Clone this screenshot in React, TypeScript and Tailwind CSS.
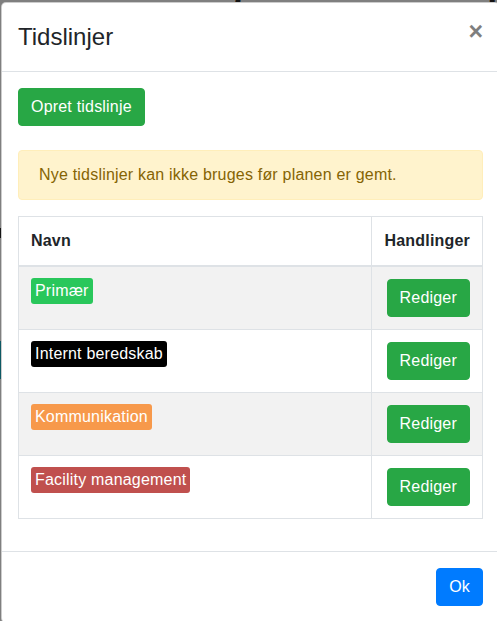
import React from "react";

const rows: { name: string; color: string }[] = [
  { name: "Primær", color: "bg-[#29c75b]" },
  { name: "Internt beredskab", color: "bg-[#000000]" },
  { name: "Kommunikation", color: "bg-[#f7994b]" },
  { name: "Facility management", color: "bg-[#c0504e]" },
];

export default function App() {
  return (
    <div
      className="relative w-[497px] h-[621px] overflow-hidden bg-[#7f7f7f] text-[#212529]"
      style={{ fontFamily: '"Liberation Sans", Arial, Helvetica, sans-serif' }}
    >
      {/* dimmed page behind the modal */}
      <div className="absolute left-[143px] top-[-30px] whitespace-nowrap text-[36px] leading-[36px] font-bold text-[#141414]">
        Rediger beredskabsplan
      </div>
      <div className="absolute left-0 top-[228px] w-[2px] h-[10px] bg-[#141414]" />
      <div className="absolute left-0 top-[341px] w-[2px] h-[38px] bg-[#0c5964]" />

      {/* modal */}
      <div className="absolute left-[1px] top-[2px] w-[499px] bg-white border border-[rgba(0,0,0,0.2)] rounded-[5px]">
        <div className="flex items-start justify-between p-4 border-b border-[#dee2e6]">
          <h4 className="text-[24px] leading-[36px] font-normal m-0">Tidslinjer</h4>
          <button className="-m-4 ml-auto p-4 text-[25px] leading-none font-bold text-black opacity-50">
            ×
          </button>
        </div>

        <div className="p-4 tracking-[0.2px]">
          <div className="mb-6">
            <button className="bg-[#28a745] text-white border border-[#28a745] rounded-[4px] px-3 py-[6px] text-base leading-6 tracking-[0.2px]">
              Opret tidslinje
            </button>
          </div>

          <div className="mb-4 border border-[#ffeeba] bg-[#fff3cd] text-[#856404] rounded-[4px] px-5 py-3 text-base leading-6">
            Nye tidslinjer kan ikke bruges før planen er gemt.
          </div>

          <table className="w-full border-collapse border border-[#dee2e6] mb-4 text-base leading-6">
            <thead>
              <tr>
                <th className="border border-[#dee2e6] border-b-2 p-3 text-left font-bold align-bottom">
                  Navn
                </th>
                <th className="border border-[#dee2e6] border-b-2 p-3 text-left font-bold align-bottom w-[1%] whitespace-nowrap">
                  Handlinger
                </th>
              </tr>
            </thead>
            <tbody>
              {rows.map((r, i) => (
                <tr key={r.name} className={i % 2 === 0 ? "bg-[#f2f2f2]" : "bg-white"}>
                  <td className="border border-[#dee2e6] p-3 align-top">
                    <span
                      className={`inline-block ${r.color} text-white rounded-[3px] px-1 py-px leading-6 -mt-px`}
                    >
                      {r.name}
                    </span>
                  </td>
                  <td className="border border-[#dee2e6] p-3 align-top text-right whitespace-nowrap">
                    <button className="bg-[#28a745] text-white border border-[#28a745] rounded-[4px] px-3 py-[6px] text-base leading-6 tracking-[0.2px]">
                      Rediger
                    </button>
                  </td>
                </tr>
              ))}
            </tbody>
          </table>
        </div>

        <div className="flex items-center justify-end p-3 border-t border-[#dee2e6]">
          <button className="m-1 bg-[#007bff] text-white border border-[#007bff] rounded-[4px] px-3 py-[6px] text-base leading-6 tracking-[0.2px]">
            Ok
          </button>
        </div>
      </div>
    </div>
  );
}
